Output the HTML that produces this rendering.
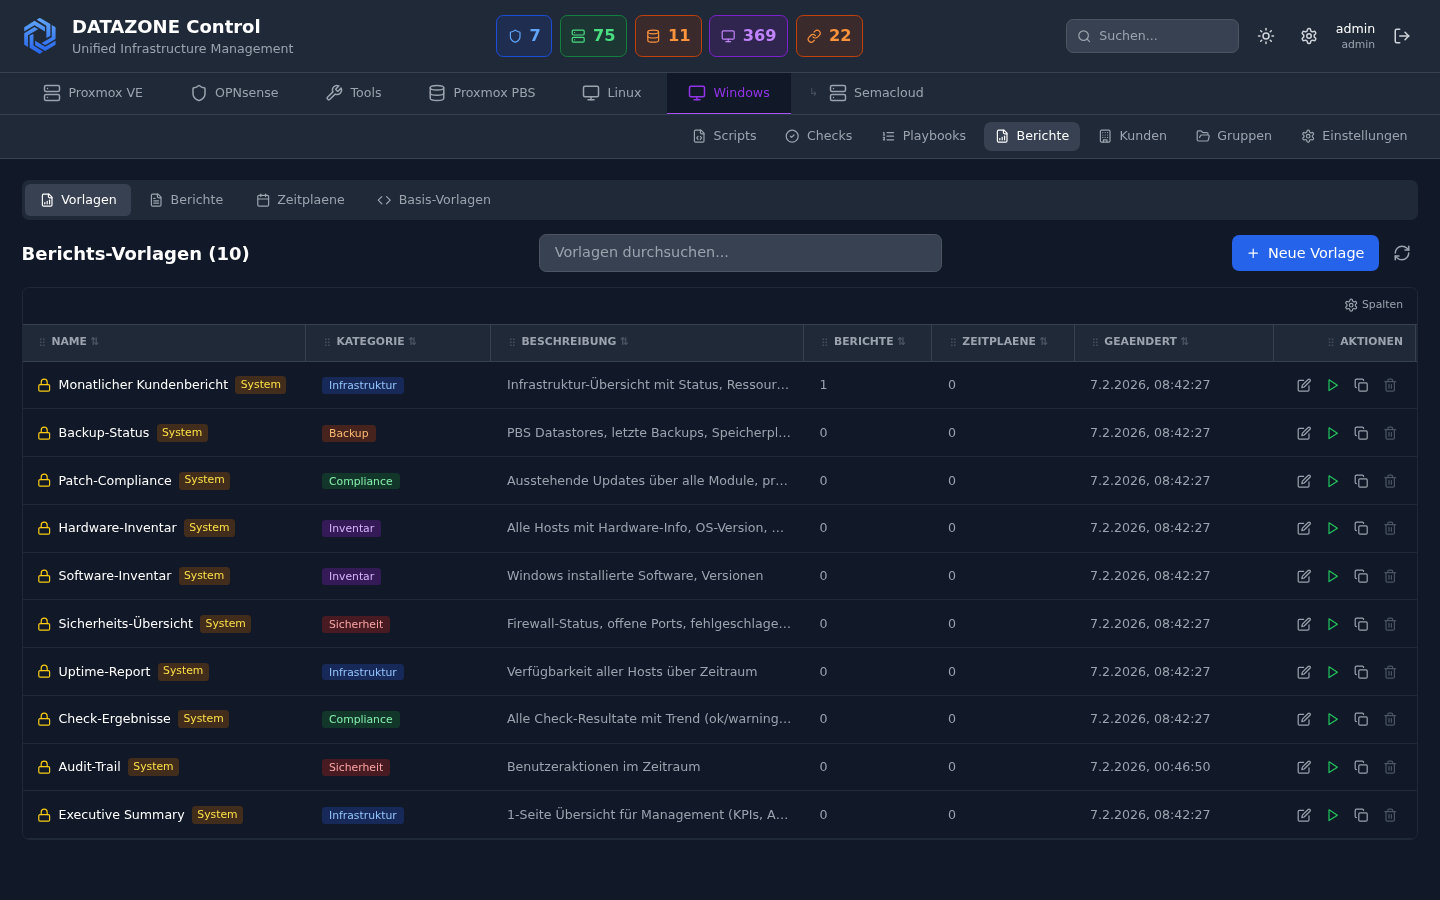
<!DOCTYPE html>
<html lang="de"><head><meta charset="utf-8"><title>DATAZONE Control</title>
<style>
html{font-size:14.4px;background:#111827}
*{box-sizing:border-box;margin:0;padding:0}
body{width:1440px;height:900px;overflow:hidden;will-change:transform;color:#f3f4f6;font-family:"DejaVu Sans","Liberation Sans",sans-serif;font-size:12.6px;line-height:18px}
.ic{width:14.4px;height:14.4px;flex:none;display:block}
.i5{width:18px;height:18px}
.i3{width:12.6px;height:12.6px}
.i25{width:10.8px;height:10.8px}
.gp{color:#4b5563}
.hdr{height:73px;background:#1f2937;border-bottom:1px solid #374151;display:flex;justify-content:space-between;align-items:center;padding:0 21.6px}
.brand{display:flex;align-items:center;gap:14.4px}
.logo{width:36px;height:36px;display:block}
.t1{font-size:18px;line-height:25.2px;font-weight:bold;color:#fff}
.t2{font-size:12.6px;line-height:18px;color:#9ca3af}
.stats{display:flex;gap:7.2px}
.st{display:flex;align-items:center;gap:7.2px;padding:7.2px 10.8px;border:1px solid;border-radius:7.2px;height:41.6px}
.st b{font-size:16.2px;line-height:25.2px;font-weight:bold}
.st.blue{background:#1f2e50;border-color:#1d4ed8;color:#60a5fa}
.st.green{background:#1c3634;border-color:#15803d;color:#4ade80}
.st.orange{background:#3b2a2c;border-color:#c2410c;color:#fb923c}
.st.purple{background:#30254f;border-color:#7e22ce;color:#c084fc}
.right{display:flex;align-items:center;gap:10.8px}
.srch{width:172.8px;height:34.4px;background:#374151;border:1px solid #4b5563;border-radius:7.2px;display:flex;align-items:center;padding-left:9.8px;color:#9ca3af;gap:8.2px}
.srch span{font-size:12.6px}
.ib{width:32.4px;height:32.4px;display:flex;align-items:center;justify-content:center;color:#d1d5db}
.usr{text-align:right}
.u1{font-size:12.6px;line-height:18px;color:#fff}
.u2{font-size:10.8px;line-height:14.4px;color:#9ca3af}
.mod{height:42px;background:#1f2937;border-bottom:1px solid #374151;display:flex;padding:0 21.6px;gap:3.6px}
.mt{display:flex;align-items:center;gap:7.2px;padding:0 21.6px 1px;height:41px;color:#9ca3af;border-bottom:1px solid transparent}
.mt.act{background:#111827;color:#9333ea;border-bottom-color:#a855f7;box-shadow:0 1px 0 #293543}
.mt.sub{padding-left:14.4px}
.mt .arr{color:#4b5563;font-size:10.8px;margin-right:3.2px}
.sub2{height:44px;background:#1f2937;border-bottom:1px solid #374151;display:flex;justify-content:flex-end;align-items:center;padding:0 21.6px;gap:7.2px}
.sb{display:flex;align-items:center;gap:7.2px;padding:0 10.8px;height:28.8px;border-radius:7.2px;color:#9ca3af}
.sb.act{background:#374151;color:#fff}
main{padding:21px 21.6px 0}
.tabs{background:#1f2937;border-radius:7.2px;padding:3.6px;display:flex;gap:3.6px;height:39.6px}
.tb{display:flex;align-items:center;gap:7.2px;padding:0 14.4px;border-radius:5.4px;color:#9ca3af}
.tb.act{background:#374151;color:#fff}
.trow{display:flex;justify-content:space-between;align-items:center;margin-top:14.4px;height:38px}
.trow h2{font-size:18px;line-height:25.2px;font-weight:bold;color:#fff;position:relative;top:1px}
.tsearch{width:403.2px;height:38px;background:#374151;border:1px solid #4b5563;border-radius:7.2px;padding:0 14.4px;font-size:14.4px;line-height:34px;color:#9ca3af}
.tright{display:flex;align-items:center;gap:7.2px}
.newb{display:flex;align-items:center;gap:7.2px;background:#2563eb;color:#fff;border-radius:7.2px;padding:0 14.4px;height:36px;font-size:14.4px}
.rf{width:32.4px;height:32.4px;display:flex;align-items:center;justify-content:center;color:#9ca3af}
.card{margin-top:15px;border:1px solid #1f2937;border-radius:7.2px;overflow:hidden}
.ctool{height:36px;display:flex;justify-content:flex-end;align-items:center;padding:0 14.4px 2px}
.spl{display:flex;align-items:center;gap:3.6px;font-size:10.8px;color:#9ca3af}
.thead{display:flex;height:38px;background:#1f2937;border-top:1px solid #374151;border-bottom:1px solid #374151}
.th{position:relative;display:flex;align-items:center;gap:3.6px;padding:0 14.4px;font-size:10.8px;font-weight:bold;color:#9ca3af}
.grip{width:10.8px;text-align:center;font-weight:normal;color:#444e5d;font-size:10.8px;line-height:14.4px;position:relative;top:1px}
.srt{color:#4b5563;font-size:10.8px;line-height:14.4px;position:relative;top:-1px}
.hl{line-height:14.4px;position:relative;top:-1px}
.th:after{content:'';position:absolute;right:2px;top:0;bottom:0;width:1px;background:#374151}
.c0{width:285px}.c1{width:185px}.c2{width:312.6px}.c3{width:128.4px}.c4{width:142px}.c5{width:200px}.c6{width:141.8px}
.th.c4:after{right:1px}
.th.c2:after{right:1.4px}
.th.c6:after{right:1.2px}
.th.c6{justify-content:flex-end}
.tr{display:flex;height:48px;border-bottom:1px solid #1f2937}
.td{display:flex;align-items:center;padding:0 14.4px;color:#9ca3af;white-space:nowrap;overflow:hidden}
.td .lk{color:#facc15;margin-right:7.2px}
.nm{color:#fff}
.sys{margin-left:7.2px;font-size:10.8px;line-height:14.4px;padding:1.8px 5.4px;border-radius:3.6px;background:#422d1c;color:#fde047}
.cat{font-size:10.8px;line-height:14.4px;padding:1.8px 7px 0.8px;margin-top:1px;border-radius:3.6px}
.cb{background:#1e3a8a80;color:#93c5fd}
.co{background:#7c2d1280;color:#fdba74}
.cg{background:#14532d80;color:#86efac}
.cp{background:#581c8780;color:#d8b4fe}
.cr{background:#7f1d1d80;color:#fca5a5}
.c6.td{justify-content:flex-end;gap:3.6px;padding-right:14.4px}
.ab{width:25.2px;height:25.2px;display:flex;align-items:center;justify-content:center;color:#9ca3af}
.ab.grn{color:#22c55e}
.ab.dim{color:#4b5563}
.u1 .lk{position:relative;top:-1px}
.u1 .sys{padding-top:.8px;padding-bottom:2.8px}
.u1 .cat{padding-bottom:0;margin-bottom:.8px}

</style></head><body>
<header class="hdr">
<div class="brand"><svg class="logo" viewBox="5.6 8 36 36"><defs><linearGradient id="lg" gradientUnits="userSpaceOnUse" x1="0" y1="8" x2="0" y2="44"><stop offset="0" stop-color="#60a5fa"/><stop offset="1" stop-color="#2563eb"/></linearGradient></defs><g fill="url(#lg)" transform="translate(7.82 0) scale(0.983 1) translate(-8.1 0)">
<polygon points="8.1,17.2 18.6,10.8 29.2,16.9 29.2,21.4 18.6,15.3 8.1,21.4"/>
<polygon points="20.8,9.7 23.9,7.8 34.7,14 34.7,26.1 30.6,28.1 30.6,15.8"/>
<polygon points="36.1,15 40,17.2 40,28.9 29.4,35.3 25.8,33.1 36.1,27.2"/>
<polygon points="19.2,30.8 29.4,36.7 40,30.8 40,34.7 29.4,41.1 19.2,35.3"/>
<polygon points="13.6,25.6 17.5,23.9 17.5,35.6 27.2,41.4 23.9,43.9 13.6,37.8"/>
<polygon points="8.1,23.3 18.6,16.9 22.2,19.2 11.9,25.3 11.9,36.9 8.1,34.7"/>
</g></svg><div class="bt"><div class="t1">DATAZONE Control</div><div class="t2">Unified Infrastructure Management</div></div></div>
<div class="stats">
<div class="st blue"><svg class="ic " viewBox="0 0 24 24" fill="none" stroke="currentColor" stroke-width="2" stroke-linecap="round" stroke-linejoin="round"><path d="M20 13c0 5-3.5 7.5-7.66 8.95a1 1 0 0 1-.67-.01C7.5 20.5 4 18 4 13V6a1 1 0 0 1 1-1c2 0 4.5-1.2 6.24-2.72a1.17 1.17 0 0 1 1.52 0C14.51 3.81 17 5 19 5a1 1 0 0 1 1 1z"/></svg><b>7</b></div>
<div class="st green"><svg class="ic " viewBox="0 0 24 24" fill="none" stroke="currentColor" stroke-width="2" stroke-linecap="round" stroke-linejoin="round"><rect width="20" height="8" x="2" y="2" rx="2" ry="2"/><rect width="20" height="8" x="2" y="14" rx="2" ry="2"/><line x1="6" x2="6.01" y1="6" y2="6"/><line x1="6" x2="6.01" y1="18" y2="18"/></svg><b>75</b></div>
<div class="st orange"><svg class="ic " viewBox="0 0 24 24" fill="none" stroke="currentColor" stroke-width="2" stroke-linecap="round" stroke-linejoin="round"><ellipse cx="12" cy="5" rx="9" ry="3"/><path d="M3 5V19A9 3 0 0 0 21 19V5"/><path d="M3 12A9 3 0 0 0 21 12"/></svg><b>11</b></div>
<div class="st purple"><svg class="ic " viewBox="0 0 24 24" fill="none" stroke="currentColor" stroke-width="2" stroke-linecap="round" stroke-linejoin="round"><rect width="20" height="14" x="2" y="3" rx="2"/><line x1="8" x2="16" y1="21" y2="21"/><line x1="12" x2="12" y1="17" y2="21"/></svg><b>369</b></div>
<div class="st orange"><svg class="ic " viewBox="0 0 24 24" fill="none" stroke="currentColor" stroke-width="2" stroke-linecap="round" stroke-linejoin="round"><path d="M10 13a5 5 0 0 0 7.54.54l3-3a5 5 0 0 0-7.07-7.07l-1.72 1.71"/><path d="M14 11a5 5 0 0 0-7.54-.54l-3 3a5 5 0 0 0 7.07 7.07l1.71-1.71"/></svg><b>22</b></div>
</div>
<div class="right">
<div class="srch"><svg class="ic " viewBox="0 0 24 24" fill="none" stroke="currentColor" stroke-width="2" stroke-linecap="round" stroke-linejoin="round"><circle cx="11" cy="11" r="8"/><path d="m21 21-4.3-4.3"/></svg><span>Suchen...</span></div>
<div class="ib"><svg class="ic i5" viewBox="0 0 24 24" fill="none" stroke="currentColor" stroke-width="2" stroke-linecap="round" stroke-linejoin="round"><circle cx="12" cy="12" r="4"/><path d="M12 2v2"/><path d="M12 20v2"/><path d="m4.93 4.93 1.41 1.41"/><path d="m17.66 17.66 1.41 1.41"/><path d="M2 12h2"/><path d="M20 12h2"/><path d="m6.34 17.66-1.41 1.41"/><path d="m19.07 4.93-1.41 1.41"/></svg></div>
<div class="ib"><svg class="ic i5" viewBox="0 0 24 24" fill="none" stroke="currentColor" stroke-width="2" stroke-linecap="round" stroke-linejoin="round"><path d="M12.22 2h-.44a2 2 0 0 0-2 2v.18a2 2 0 0 1-1 1.73l-.43.25a2 2 0 0 1-2 0l-.15-.08a2 2 0 0 0-2.73.73l-.22.38a2 2 0 0 0 .73 2.73l.15.1a2 2 0 0 1 1 1.72v.51a2 2 0 0 1-1 1.74l-.15.09a2 2 0 0 0-.73 2.73l.22.38a2 2 0 0 0 2.73.73l.15-.08a2 2 0 0 1 2 0l.43.25a2 2 0 0 1 1 1.73V20a2 2 0 0 0 2 2h.44a2 2 0 0 0 2-2v-.18a2 2 0 0 1 1-1.73l.43-.25a2 2 0 0 1 2 0l.15.08a2 2 0 0 0 2.73-.73l.22-.39a2 2 0 0 0-.73-2.73l-.15-.08a2 2 0 0 1-1-1.74v-.5a2 2 0 0 1 1-1.74l.15-.09a2 2 0 0 0 .73-2.73l-.22-.38a2 2 0 0 0-2.73-.73l-.15.08a2 2 0 0 1-2 0l-.43-.25a2 2 0 0 1-1-1.73V4a2 2 0 0 0-2-2z"/><circle cx="12" cy="12" r="3"/></svg></div>
<div class="usr"><div class="u1">admin</div><div class="u2">admin</div></div>
<div class="ib"><svg class="ic i5" viewBox="0 0 24 24" fill="none" stroke="currentColor" stroke-width="2" stroke-linecap="round" stroke-linejoin="round"><path d="M9 21H5a2 2 0 0 1-2-2V5a2 2 0 0 1 2-2h4"/><polyline points="16 17 21 12 16 7"/><line x1="21" x2="9" y1="12" y2="12"/></svg></div>
</div>
</header>
<nav class="mod"><div class="mt "><svg class="ic i5" viewBox="0 0 24 24" fill="none" stroke="currentColor" stroke-width="2" stroke-linecap="round" stroke-linejoin="round"><rect width="20" height="8" x="2" y="2" rx="2" ry="2"/><rect width="20" height="8" x="2" y="14" rx="2" ry="2"/><line x1="6" x2="6.01" y1="6" y2="6"/><line x1="6" x2="6.01" y1="18" y2="18"/></svg><span>Proxmox VE</span></div><div class="mt "><svg class="ic i5" viewBox="0 0 24 24" fill="none" stroke="currentColor" stroke-width="2" stroke-linecap="round" stroke-linejoin="round"><path d="M20 13c0 5-3.5 7.5-7.66 8.95a1 1 0 0 1-.67-.01C7.5 20.5 4 18 4 13V6a1 1 0 0 1 1-1c2 0 4.5-1.2 6.24-2.72a1.17 1.17 0 0 1 1.52 0C14.51 3.81 17 5 19 5a1 1 0 0 1 1 1z"/></svg><span>OPNsense</span></div><div class="mt "><svg class="ic i5" viewBox="0 0 24 24" fill="none" stroke="currentColor" stroke-width="2" stroke-linecap="round" stroke-linejoin="round"><path d="M14.7 6.3a1 1 0 0 0 0 1.4l1.6 1.6a1 1 0 0 0 1.4 0l3.77-3.77a6 6 0 0 1-7.94 7.94l-6.91 6.91a2.12 2.12 0 0 1-3-3l6.91-6.91a6 6 0 0 1 7.94-7.94l-3.76 3.76z"/></svg><span>Tools</span></div><div class="mt "><svg class="ic i5" viewBox="0 0 24 24" fill="none" stroke="currentColor" stroke-width="2" stroke-linecap="round" stroke-linejoin="round"><ellipse cx="12" cy="5" rx="9" ry="3"/><path d="M3 5V19A9 3 0 0 0 21 19V5"/><path d="M3 12A9 3 0 0 0 21 12"/></svg><span>Proxmox PBS</span></div><div class="mt "><svg class="ic i5" viewBox="0 0 24 24" fill="none" stroke="currentColor" stroke-width="2" stroke-linecap="round" stroke-linejoin="round"><rect width="20" height="14" x="2" y="3" rx="2"/><line x1="8" x2="16" y1="21" y2="21"/><line x1="12" x2="12" y1="17" y2="21"/></svg><span>Linux</span></div><div class="mt act"><svg class="ic i5" viewBox="0 0 24 24" fill="none" stroke="currentColor" stroke-width="2" stroke-linecap="round" stroke-linejoin="round"><rect width="20" height="14" x="2" y="3" rx="2"/><line x1="8" x2="16" y1="21" y2="21"/><line x1="12" x2="12" y1="17" y2="21"/></svg><span>Windows</span></div><div class="mt sub"><span class="arr">↳</span><svg class="ic i5" viewBox="0 0 24 24" fill="none" stroke="currentColor" stroke-width="2" stroke-linecap="round" stroke-linejoin="round"><rect width="20" height="8" x="2" y="2" rx="2" ry="2"/><rect width="20" height="8" x="2" y="14" rx="2" ry="2"/><line x1="6" x2="6.01" y1="6" y2="6"/><line x1="6" x2="6.01" y1="18" y2="18"/></svg><span>Semacloud</span></div></nav>
<nav class="sub2"><div class="sb "><svg class="ic " viewBox="0 0 24 24" fill="none" stroke="currentColor" stroke-width="2" stroke-linecap="round" stroke-linejoin="round"><path d="M10 12.5 8 15l2 2.5"/><path d="m14 12.5 2 2.5-2 2.5"/><path d="M14 2v4a2 2 0 0 0 2 2h4"/><path d="M15 2H6a2 2 0 0 0-2 2v16a2 2 0 0 0 2 2h12a2 2 0 0 0 2-2V7z"/></svg><span>Scripts</span></div><div class="sb "><svg class="ic " viewBox="0 0 24 24" fill="none" stroke="currentColor" stroke-width="2" stroke-linecap="round" stroke-linejoin="round"><circle cx="12" cy="12" r="10"/><path d="m9 12 2 2 4-4"/></svg><span>Checks</span></div><div class="sb "><svg class="ic " viewBox="0 0 24 24" fill="none" stroke="currentColor" stroke-width="2" stroke-linecap="round" stroke-linejoin="round"><line x1="10" x2="21" y1="6" y2="6"/><line x1="10" x2="21" y1="12" y2="12"/><line x1="10" x2="21" y1="18" y2="18"/><path d="M4 6h1v4"/><path d="M4 10h2"/><path d="M6 18H4c0-1 2-2 2-3s-1-1.5-2-1"/></svg><span>Playbooks</span></div><div class="sb act"><svg class="ic " viewBox="0 0 24 24" fill="none" stroke="currentColor" stroke-width="2" stroke-linecap="round" stroke-linejoin="round"><path d="M15 2H6a2 2 0 0 0-2 2v16a2 2 0 0 0 2 2h12a2 2 0 0 0 2-2V7Z"/><path d="M14 2v4a2 2 0 0 0 2 2h4"/><path d="M8 18v-2"/><path d="M12 18v-4"/><path d="M16 18v-6"/></svg><span>Berichte</span></div><div class="sb "><svg class="ic " viewBox="0 0 24 24" fill="none" stroke="currentColor" stroke-width="2" stroke-linecap="round" stroke-linejoin="round"><rect width="16" height="20" x="4" y="2" rx="2" ry="2"/><path d="M9 22v-4h6v4"/><path d="M8 6h.01"/><path d="M16 6h.01"/><path d="M12 6h.01"/><path d="M12 10h.01"/><path d="M12 14h.01"/><path d="M16 10h.01"/><path d="M16 14h.01"/><path d="M8 10h.01"/><path d="M8 14h.01"/></svg><span>Kunden</span></div><div class="sb "><svg class="ic " viewBox="0 0 24 24" fill="none" stroke="currentColor" stroke-width="2" stroke-linecap="round" stroke-linejoin="round"><path d="m6 14 1.5-2.9A2 2 0 0 1 9.24 10H20a2 2 0 0 1 1.94 2.5l-1.54 6a2 2 0 0 1-1.95 1.5H4a2 2 0 0 1-2-2V5a2 2 0 0 1 2-2h3.9a2 2 0 0 1 1.69.9l.81 1.2a2 2 0 0 0 1.67.9H18a2 2 0 0 1 2 2v2"/></svg><span>Gruppen</span></div><div class="sb "><svg class="ic " viewBox="0 0 24 24" fill="none" stroke="currentColor" stroke-width="2" stroke-linecap="round" stroke-linejoin="round"><path d="M12.22 2h-.44a2 2 0 0 0-2 2v.18a2 2 0 0 1-1 1.73l-.43.25a2 2 0 0 1-2 0l-.15-.08a2 2 0 0 0-2.73.73l-.22.38a2 2 0 0 0 .73 2.73l.15.1a2 2 0 0 1 1 1.72v.51a2 2 0 0 1-1 1.74l-.15.09a2 2 0 0 0-.73 2.73l.22.38a2 2 0 0 0 2.73.73l.15-.08a2 2 0 0 1 2 0l.43.25a2 2 0 0 1 1 1.73V20a2 2 0 0 0 2 2h.44a2 2 0 0 0 2-2v-.18a2 2 0 0 1 1-1.73l.43-.25a2 2 0 0 1 2 0l.15.08a2 2 0 0 0 2.73-.73l.22-.39a2 2 0 0 0-.73-2.73l-.15-.08a2 2 0 0 1-1-1.74v-.5a2 2 0 0 1 1-1.74l.15-.09a2 2 0 0 0 .73-2.73l-.22-.38a2 2 0 0 0-2.73-.73l-.15.08a2 2 0 0 1-2 0l-.43-.25a2 2 0 0 1-1-1.73V4a2 2 0 0 0-2-2z"/><circle cx="12" cy="12" r="3"/></svg><span>Einstellungen</span></div></nav>
<main>
<div class="tabs"><div class="tb act"><svg class="ic " viewBox="0 0 24 24" fill="none" stroke="currentColor" stroke-width="2" stroke-linecap="round" stroke-linejoin="round"><path d="M15 2H6a2 2 0 0 0-2 2v16a2 2 0 0 0 2 2h12a2 2 0 0 0 2-2V7Z"/><path d="M14 2v4a2 2 0 0 0 2 2h4"/><path d="M8 18v-2"/><path d="M12 18v-4"/><path d="M16 18v-6"/></svg><span>Vorlagen</span></div><div class="tb "><svg class="ic " viewBox="0 0 24 24" fill="none" stroke="currentColor" stroke-width="2" stroke-linecap="round" stroke-linejoin="round"><path d="M15 2H6a2 2 0 0 0-2 2v16a2 2 0 0 0 2 2h12a2 2 0 0 0 2-2V7Z"/><path d="M14 2v4a2 2 0 0 0 2 2h4"/><path d="M10 9H8"/><path d="M16 13H8"/><path d="M16 17H8"/></svg><span>Berichte</span></div><div class="tb "><svg class="ic " viewBox="0 0 24 24" fill="none" stroke="currentColor" stroke-width="2" stroke-linecap="round" stroke-linejoin="round"><path d="M8 2v4"/><path d="M16 2v4"/><rect width="18" height="18" x="3" y="4" rx="2"/><path d="M3 10h18"/></svg><span>Zeitplaene</span></div><div class="tb "><svg class="ic " viewBox="0 0 24 24" fill="none" stroke="currentColor" stroke-width="2" stroke-linecap="round" stroke-linejoin="round"><polyline points="16 18 22 12 16 6"/><polyline points="8 6 2 12 8 18"/></svg><span>Basis-Vorlagen</span></div></div>
<div class="trow"><h2>Berichts-Vorlagen (10)</h2><div class="tsearch">Vorlagen durchsuchen...</div><div class="tright"><div class="newb"><svg class="ic " viewBox="0 0 24 24" fill="none" stroke="currentColor" stroke-width="2" stroke-linecap="round" stroke-linejoin="round"><path d="M5 12h14"/><path d="M12 5v14"/></svg><span>Neue Vorlage</span></div><div class="rf"><svg class="ic i5" viewBox="0 0 24 24" fill="none" stroke="currentColor" stroke-width="2" stroke-linecap="round" stroke-linejoin="round"><path d="M3 12a9 9 0 0 1 9-9 9.75 9.75 0 0 1 6.74 2.74L21 8"/><path d="M21 3v5h-5"/><path d="M21 12a9 9 0 0 1-9 9 9.75 9.75 0 0 1-6.74-2.74L3 16"/><path d="M8 16H3v5"/></svg></div></div></div>
<div class="card"><div class="ctool"><div class="spl"><svg class="ic " viewBox="0 0 24 24" fill="none" stroke="currentColor" stroke-width="2" stroke-linecap="round" stroke-linejoin="round"><path d="M12.22 2h-.44a2 2 0 0 0-2 2v.18a2 2 0 0 1-1 1.73l-.43.25a2 2 0 0 1-2 0l-.15-.08a2 2 0 0 0-2.73.73l-.22.38a2 2 0 0 0 .73 2.73l.15.1a2 2 0 0 1 1 1.72v.51a2 2 0 0 1-1 1.74l-.15.09a2 2 0 0 0-.73 2.73l.22.38a2 2 0 0 0 2.73.73l.15-.08a2 2 0 0 1 2 0l.43.25a2 2 0 0 1 1 1.73V20a2 2 0 0 0 2 2h.44a2 2 0 0 0 2-2v-.18a2 2 0 0 1 1-1.73l.43-.25a2 2 0 0 1 2 0l.15.08a2 2 0 0 0 2.73-.73l.22-.39a2 2 0 0 0-.73-2.73l-.15-.08a2 2 0 0 1-1-1.74v-.5a2 2 0 0 1 1-1.74l.15-.09a2 2 0 0 0 .73-2.73l-.22-.38a2 2 0 0 0-2.73-.73l-.15.08a2 2 0 0 1-2 0l-.43-.25a2 2 0 0 1-1-1.73V4a2 2 0 0 0-2-2z"/><circle cx="12" cy="12" r="3"/></svg><span>Spalten</span></div></div><div class="thead"><div class="th c0"><span class="grip">⠿</span><span class="hl">NAME</span><span class="srt">⇅</span></div><div class="th c1"><span class="grip">⠿</span><span class="hl">KATEGORIE</span><span class="srt">⇅</span></div><div class="th c2"><span class="grip">⠿</span><span class="hl">BESCHREIBUNG</span><span class="srt">⇅</span></div><div class="th c3"><span class="grip">⠿</span><span class="hl">BERICHTE</span><span class="srt">⇅</span></div><div class="th c4"><span class="grip">⠿</span><span class="hl">ZEITPLAENE</span><span class="srt">⇅</span></div><div class="th c5"><span class="grip">⠿</span><span class="hl">GEAENDERT</span><span class="srt">⇅</span></div><div class="th c6"><span class="grip">⠿</span><span class="hl">AKTIONEN</span></div></div><div class="tbody"><div class="tr" style="height:47px"><div class="td c0"><svg class="ic lk" viewBox="0 0 24 24" fill="none" stroke="currentColor" stroke-width="2" stroke-linecap="round" stroke-linejoin="round"><rect width="18" height="11" x="3" y="11" rx="2" ry="2"/><path d="M7 11V7a5 5 0 0 1 10 0v4"/></svg><span class="nm">Monatlicher Kundenbericht</span><span class="sys">System</span></div><div class="td c1"><span class="cat cb">Infrastruktur</span></div><div class="td c2"><span class="ds">Infrastruktur-Übersicht mit Status, Ressour…</span></div><div class="td c3">1</div><div class="td c4">0</div><div class="td c5">7.2.2026, 08:42:27</div><div class="td c6"><span class="ab"><svg class="ic " viewBox="0 0 24 24" fill="none" stroke="currentColor" stroke-width="2" stroke-linecap="round" stroke-linejoin="round"><path d="M11 4H4a2 2 0 0 0-2 2v14a2 2 0 0 0 2 2h14a2 2 0 0 0 2-2v-7"/><path d="M18.5 2.5a2.121 2.121 0 0 1 3 3L12 15l-4 1 1-4 9.5-9.5z"/></svg></span><span class="ab grn"><svg class="ic " viewBox="0 0 24 24" fill="none" stroke="currentColor" stroke-width="2" stroke-linecap="round" stroke-linejoin="round"><polygon points="5 3 19 12 5 21 5 3"/></svg></span><span class="ab"><svg class="ic " viewBox="0 0 24 24" fill="none" stroke="currentColor" stroke-width="2" stroke-linecap="round" stroke-linejoin="round"><rect width="14" height="14" x="8" y="8" rx="2" ry="2"/><path d="M4 16c-1.1 0-2-.9-2-2V4c0-1.1.9-2 2-2h10c1.1 0 2 .9 2 2"/></svg></span><span class="ab dim"><svg class="ic " viewBox="0 0 24 24" fill="none" stroke="currentColor" stroke-width="2" stroke-linecap="round" stroke-linejoin="round"><path d="M3 6h18"/><path d="M19 6v14c0 1-1 2-2 2H7c-1 0-2-1-2-2V6"/><path d="M8 6V4c0-1 1-2 2-2h4c1 0 2 1 2 2v2"/><line x1="10" x2="10" y1="11" y2="17"/><line x1="14" x2="14" y1="11" y2="17"/></svg></span></div></div>
<div class="tr" style="height:48px;padding-top:1px"><div class="td c0"><svg class="ic lk" viewBox="0 0 24 24" fill="none" stroke="currentColor" stroke-width="2" stroke-linecap="round" stroke-linejoin="round"><rect width="18" height="11" x="3" y="11" rx="2" ry="2"/><path d="M7 11V7a5 5 0 0 1 10 0v4"/></svg><span class="nm">Backup-Status</span><span class="sys">System</span></div><div class="td c1"><span class="cat co">Backup</span></div><div class="td c2"><span class="ds">PBS Datastores, letzte Backups, Speicherpl…</span></div><div class="td c3">0</div><div class="td c4">0</div><div class="td c5">7.2.2026, 08:42:27</div><div class="td c6"><span class="ab"><svg class="ic " viewBox="0 0 24 24" fill="none" stroke="currentColor" stroke-width="2" stroke-linecap="round" stroke-linejoin="round"><path d="M11 4H4a2 2 0 0 0-2 2v14a2 2 0 0 0 2 2h14a2 2 0 0 0 2-2v-7"/><path d="M18.5 2.5a2.121 2.121 0 0 1 3 3L12 15l-4 1 1-4 9.5-9.5z"/></svg></span><span class="ab grn"><svg class="ic " viewBox="0 0 24 24" fill="none" stroke="currentColor" stroke-width="2" stroke-linecap="round" stroke-linejoin="round"><polygon points="5 3 19 12 5 21 5 3"/></svg></span><span class="ab"><svg class="ic " viewBox="0 0 24 24" fill="none" stroke="currentColor" stroke-width="2" stroke-linecap="round" stroke-linejoin="round"><rect width="14" height="14" x="8" y="8" rx="2" ry="2"/><path d="M4 16c-1.1 0-2-.9-2-2V4c0-1.1.9-2 2-2h10c1.1 0 2 .9 2 2"/></svg></span><span class="ab dim"><svg class="ic " viewBox="0 0 24 24" fill="none" stroke="currentColor" stroke-width="2" stroke-linecap="round" stroke-linejoin="round"><path d="M3 6h18"/><path d="M19 6v14c0 1-1 2-2 2H7c-1 0-2-1-2-2V6"/><path d="M8 6V4c0-1 1-2 2-2h4c1 0 2 1 2 2v2"/><line x1="10" x2="10" y1="11" y2="17"/><line x1="14" x2="14" y1="11" y2="17"/></svg></span></div></div>
<div class="tr u1" style="height:48px;padding-top:1px"><div class="td c0"><svg class="ic lk" viewBox="0 0 24 24" fill="none" stroke="currentColor" stroke-width="2" stroke-linecap="round" stroke-linejoin="round"><rect width="18" height="11" x="3" y="11" rx="2" ry="2"/><path d="M7 11V7a5 5 0 0 1 10 0v4"/></svg><span class="nm">Patch-Compliance</span><span class="sys">System</span></div><div class="td c1"><span class="cat cg">Compliance</span></div><div class="td c2"><span class="ds">Ausstehende Updates über alle Module, pr…</span></div><div class="td c3">0</div><div class="td c4">0</div><div class="td c5">7.2.2026, 08:42:27</div><div class="td c6"><span class="ab"><svg class="ic " viewBox="0 0 24 24" fill="none" stroke="currentColor" stroke-width="2" stroke-linecap="round" stroke-linejoin="round"><path d="M11 4H4a2 2 0 0 0-2 2v14a2 2 0 0 0 2 2h14a2 2 0 0 0 2-2v-7"/><path d="M18.5 2.5a2.121 2.121 0 0 1 3 3L12 15l-4 1 1-4 9.5-9.5z"/></svg></span><span class="ab grn"><svg class="ic " viewBox="0 0 24 24" fill="none" stroke="currentColor" stroke-width="2" stroke-linecap="round" stroke-linejoin="round"><polygon points="5 3 19 12 5 21 5 3"/></svg></span><span class="ab"><svg class="ic " viewBox="0 0 24 24" fill="none" stroke="currentColor" stroke-width="2" stroke-linecap="round" stroke-linejoin="round"><rect width="14" height="14" x="8" y="8" rx="2" ry="2"/><path d="M4 16c-1.1 0-2-.9-2-2V4c0-1.1.9-2 2-2h10c1.1 0 2 .9 2 2"/></svg></span><span class="ab dim"><svg class="ic " viewBox="0 0 24 24" fill="none" stroke="currentColor" stroke-width="2" stroke-linecap="round" stroke-linejoin="round"><path d="M3 6h18"/><path d="M19 6v14c0 1-1 2-2 2H7c-1 0-2-1-2-2V6"/><path d="M8 6V4c0-1 1-2 2-2h4c1 0 2 1 2 2v2"/><line x1="10" x2="10" y1="11" y2="17"/><line x1="14" x2="14" y1="11" y2="17"/></svg></span></div></div>
<div class="tr" style="height:48px;padding-bottom:1px"><div class="td c0"><svg class="ic lk" viewBox="0 0 24 24" fill="none" stroke="currentColor" stroke-width="2" stroke-linecap="round" stroke-linejoin="round"><rect width="18" height="11" x="3" y="11" rx="2" ry="2"/><path d="M7 11V7a5 5 0 0 1 10 0v4"/></svg><span class="nm">Hardware-Inventar</span><span class="sys">System</span></div><div class="td c1"><span class="cat cp">Inventar</span></div><div class="td c2"><span class="ds">Alle Hosts mit Hardware-Info, OS-Version, …</span></div><div class="td c3">0</div><div class="td c4">0</div><div class="td c5">7.2.2026, 08:42:27</div><div class="td c6"><span class="ab"><svg class="ic " viewBox="0 0 24 24" fill="none" stroke="currentColor" stroke-width="2" stroke-linecap="round" stroke-linejoin="round"><path d="M11 4H4a2 2 0 0 0-2 2v14a2 2 0 0 0 2 2h14a2 2 0 0 0 2-2v-7"/><path d="M18.5 2.5a2.121 2.121 0 0 1 3 3L12 15l-4 1 1-4 9.5-9.5z"/></svg></span><span class="ab grn"><svg class="ic " viewBox="0 0 24 24" fill="none" stroke="currentColor" stroke-width="2" stroke-linecap="round" stroke-linejoin="round"><polygon points="5 3 19 12 5 21 5 3"/></svg></span><span class="ab"><svg class="ic " viewBox="0 0 24 24" fill="none" stroke="currentColor" stroke-width="2" stroke-linecap="round" stroke-linejoin="round"><rect width="14" height="14" x="8" y="8" rx="2" ry="2"/><path d="M4 16c-1.1 0-2-.9-2-2V4c0-1.1.9-2 2-2h10c1.1 0 2 .9 2 2"/></svg></span><span class="ab dim"><svg class="ic " viewBox="0 0 24 24" fill="none" stroke="currentColor" stroke-width="2" stroke-linecap="round" stroke-linejoin="round"><path d="M3 6h18"/><path d="M19 6v14c0 1-1 2-2 2H7c-1 0-2-1-2-2V6"/><path d="M8 6V4c0-1 1-2 2-2h4c1 0 2 1 2 2v2"/><line x1="10" x2="10" y1="11" y2="17"/><line x1="14" x2="14" y1="11" y2="17"/></svg></span></div></div>
<div class="tr" style="height:47px"><div class="td c0"><svg class="ic lk" viewBox="0 0 24 24" fill="none" stroke="currentColor" stroke-width="2" stroke-linecap="round" stroke-linejoin="round"><rect width="18" height="11" x="3" y="11" rx="2" ry="2"/><path d="M7 11V7a5 5 0 0 1 10 0v4"/></svg><span class="nm">Software-Inventar</span><span class="sys">System</span></div><div class="td c1"><span class="cat cp">Inventar</span></div><div class="td c2"><span class="ds">Windows installierte Software, Versionen</span></div><div class="td c3">0</div><div class="td c4">0</div><div class="td c5">7.2.2026, 08:42:27</div><div class="td c6"><span class="ab"><svg class="ic " viewBox="0 0 24 24" fill="none" stroke="currentColor" stroke-width="2" stroke-linecap="round" stroke-linejoin="round"><path d="M11 4H4a2 2 0 0 0-2 2v14a2 2 0 0 0 2 2h14a2 2 0 0 0 2-2v-7"/><path d="M18.5 2.5a2.121 2.121 0 0 1 3 3L12 15l-4 1 1-4 9.5-9.5z"/></svg></span><span class="ab grn"><svg class="ic " viewBox="0 0 24 24" fill="none" stroke="currentColor" stroke-width="2" stroke-linecap="round" stroke-linejoin="round"><polygon points="5 3 19 12 5 21 5 3"/></svg></span><span class="ab"><svg class="ic " viewBox="0 0 24 24" fill="none" stroke="currentColor" stroke-width="2" stroke-linecap="round" stroke-linejoin="round"><rect width="14" height="14" x="8" y="8" rx="2" ry="2"/><path d="M4 16c-1.1 0-2-.9-2-2V4c0-1.1.9-2 2-2h10c1.1 0 2 .9 2 2"/></svg></span><span class="ab dim"><svg class="ic " viewBox="0 0 24 24" fill="none" stroke="currentColor" stroke-width="2" stroke-linecap="round" stroke-linejoin="round"><path d="M3 6h18"/><path d="M19 6v14c0 1-1 2-2 2H7c-1 0-2-1-2-2V6"/><path d="M8 6V4c0-1 1-2 2-2h4c1 0 2 1 2 2v2"/><line x1="10" x2="10" y1="11" y2="17"/><line x1="14" x2="14" y1="11" y2="17"/></svg></span></div></div>
<div class="tr" style="height:48px;padding-top:1px"><div class="td c0"><svg class="ic lk" viewBox="0 0 24 24" fill="none" stroke="currentColor" stroke-width="2" stroke-linecap="round" stroke-linejoin="round"><rect width="18" height="11" x="3" y="11" rx="2" ry="2"/><path d="M7 11V7a5 5 0 0 1 10 0v4"/></svg><span class="nm">Sicherheits-Übersicht</span><span class="sys">System</span></div><div class="td c1"><span class="cat cr">Sicherheit</span></div><div class="td c2"><span class="ds">Firewall-Status, offene Ports, fehlgeschlage…</span></div><div class="td c3">0</div><div class="td c4">0</div><div class="td c5">7.2.2026, 08:42:27</div><div class="td c6"><span class="ab"><svg class="ic " viewBox="0 0 24 24" fill="none" stroke="currentColor" stroke-width="2" stroke-linecap="round" stroke-linejoin="round"><path d="M11 4H4a2 2 0 0 0-2 2v14a2 2 0 0 0 2 2h14a2 2 0 0 0 2-2v-7"/><path d="M18.5 2.5a2.121 2.121 0 0 1 3 3L12 15l-4 1 1-4 9.5-9.5z"/></svg></span><span class="ab grn"><svg class="ic " viewBox="0 0 24 24" fill="none" stroke="currentColor" stroke-width="2" stroke-linecap="round" stroke-linejoin="round"><polygon points="5 3 19 12 5 21 5 3"/></svg></span><span class="ab"><svg class="ic " viewBox="0 0 24 24" fill="none" stroke="currentColor" stroke-width="2" stroke-linecap="round" stroke-linejoin="round"><rect width="14" height="14" x="8" y="8" rx="2" ry="2"/><path d="M4 16c-1.1 0-2-.9-2-2V4c0-1.1.9-2 2-2h10c1.1 0 2 .9 2 2"/></svg></span><span class="ab dim"><svg class="ic " viewBox="0 0 24 24" fill="none" stroke="currentColor" stroke-width="2" stroke-linecap="round" stroke-linejoin="round"><path d="M3 6h18"/><path d="M19 6v14c0 1-1 2-2 2H7c-1 0-2-1-2-2V6"/><path d="M8 6V4c0-1 1-2 2-2h4c1 0 2 1 2 2v2"/><line x1="10" x2="10" y1="11" y2="17"/><line x1="14" x2="14" y1="11" y2="17"/></svg></span></div></div>
<div class="tr u1" style="height:48px;padding-top:1px"><div class="td c0"><svg class="ic lk" viewBox="0 0 24 24" fill="none" stroke="currentColor" stroke-width="2" stroke-linecap="round" stroke-linejoin="round"><rect width="18" height="11" x="3" y="11" rx="2" ry="2"/><path d="M7 11V7a5 5 0 0 1 10 0v4"/></svg><span class="nm">Uptime-Report</span><span class="sys">System</span></div><div class="td c1"><span class="cat cb">Infrastruktur</span></div><div class="td c2"><span class="ds">Verfügbarkeit aller Hosts über Zeitraum</span></div><div class="td c3">0</div><div class="td c4">0</div><div class="td c5">7.2.2026, 08:42:27</div><div class="td c6"><span class="ab"><svg class="ic " viewBox="0 0 24 24" fill="none" stroke="currentColor" stroke-width="2" stroke-linecap="round" stroke-linejoin="round"><path d="M11 4H4a2 2 0 0 0-2 2v14a2 2 0 0 0 2 2h14a2 2 0 0 0 2-2v-7"/><path d="M18.5 2.5a2.121 2.121 0 0 1 3 3L12 15l-4 1 1-4 9.5-9.5z"/></svg></span><span class="ab grn"><svg class="ic " viewBox="0 0 24 24" fill="none" stroke="currentColor" stroke-width="2" stroke-linecap="round" stroke-linejoin="round"><polygon points="5 3 19 12 5 21 5 3"/></svg></span><span class="ab"><svg class="ic " viewBox="0 0 24 24" fill="none" stroke="currentColor" stroke-width="2" stroke-linecap="round" stroke-linejoin="round"><rect width="14" height="14" x="8" y="8" rx="2" ry="2"/><path d="M4 16c-1.1 0-2-.9-2-2V4c0-1.1.9-2 2-2h10c1.1 0 2 .9 2 2"/></svg></span><span class="ab dim"><svg class="ic " viewBox="0 0 24 24" fill="none" stroke="currentColor" stroke-width="2" stroke-linecap="round" stroke-linejoin="round"><path d="M3 6h18"/><path d="M19 6v14c0 1-1 2-2 2H7c-1 0-2-1-2-2V6"/><path d="M8 6V4c0-1 1-2 2-2h4c1 0 2 1 2 2v2"/><line x1="10" x2="10" y1="11" y2="17"/><line x1="14" x2="14" y1="11" y2="17"/></svg></span></div></div>
<div class="tr" style="height:48px;padding-bottom:1px"><div class="td c0"><svg class="ic lk" viewBox="0 0 24 24" fill="none" stroke="currentColor" stroke-width="2" stroke-linecap="round" stroke-linejoin="round"><rect width="18" height="11" x="3" y="11" rx="2" ry="2"/><path d="M7 11V7a5 5 0 0 1 10 0v4"/></svg><span class="nm">Check-Ergebnisse</span><span class="sys">System</span></div><div class="td c1"><span class="cat cg">Compliance</span></div><div class="td c2"><span class="ds">Alle Check-Resultate mit Trend (ok/warning…</span></div><div class="td c3">0</div><div class="td c4">0</div><div class="td c5">7.2.2026, 08:42:27</div><div class="td c6"><span class="ab"><svg class="ic " viewBox="0 0 24 24" fill="none" stroke="currentColor" stroke-width="2" stroke-linecap="round" stroke-linejoin="round"><path d="M11 4H4a2 2 0 0 0-2 2v14a2 2 0 0 0 2 2h14a2 2 0 0 0 2-2v-7"/><path d="M18.5 2.5a2.121 2.121 0 0 1 3 3L12 15l-4 1 1-4 9.5-9.5z"/></svg></span><span class="ab grn"><svg class="ic " viewBox="0 0 24 24" fill="none" stroke="currentColor" stroke-width="2" stroke-linecap="round" stroke-linejoin="round"><polygon points="5 3 19 12 5 21 5 3"/></svg></span><span class="ab"><svg class="ic " viewBox="0 0 24 24" fill="none" stroke="currentColor" stroke-width="2" stroke-linecap="round" stroke-linejoin="round"><rect width="14" height="14" x="8" y="8" rx="2" ry="2"/><path d="M4 16c-1.1 0-2-.9-2-2V4c0-1.1.9-2 2-2h10c1.1 0 2 .9 2 2"/></svg></span><span class="ab dim"><svg class="ic " viewBox="0 0 24 24" fill="none" stroke="currentColor" stroke-width="2" stroke-linecap="round" stroke-linejoin="round"><path d="M3 6h18"/><path d="M19 6v14c0 1-1 2-2 2H7c-1 0-2-1-2-2V6"/><path d="M8 6V4c0-1 1-2 2-2h4c1 0 2 1 2 2v2"/><line x1="10" x2="10" y1="11" y2="17"/><line x1="14" x2="14" y1="11" y2="17"/></svg></span></div></div>
<div class="tr" style="height:47px"><div class="td c0"><svg class="ic lk" viewBox="0 0 24 24" fill="none" stroke="currentColor" stroke-width="2" stroke-linecap="round" stroke-linejoin="round"><rect width="18" height="11" x="3" y="11" rx="2" ry="2"/><path d="M7 11V7a5 5 0 0 1 10 0v4"/></svg><span class="nm">Audit-Trail</span><span class="sys">System</span></div><div class="td c1"><span class="cat cr">Sicherheit</span></div><div class="td c2"><span class="ds">Benutzeraktionen im Zeitraum</span></div><div class="td c3">0</div><div class="td c4">0</div><div class="td c5">7.2.2026, 00:46:50</div><div class="td c6"><span class="ab"><svg class="ic " viewBox="0 0 24 24" fill="none" stroke="currentColor" stroke-width="2" stroke-linecap="round" stroke-linejoin="round"><path d="M11 4H4a2 2 0 0 0-2 2v14a2 2 0 0 0 2 2h14a2 2 0 0 0 2-2v-7"/><path d="M18.5 2.5a2.121 2.121 0 0 1 3 3L12 15l-4 1 1-4 9.5-9.5z"/></svg></span><span class="ab grn"><svg class="ic " viewBox="0 0 24 24" fill="none" stroke="currentColor" stroke-width="2" stroke-linecap="round" stroke-linejoin="round"><polygon points="5 3 19 12 5 21 5 3"/></svg></span><span class="ab"><svg class="ic " viewBox="0 0 24 24" fill="none" stroke="currentColor" stroke-width="2" stroke-linecap="round" stroke-linejoin="round"><rect width="14" height="14" x="8" y="8" rx="2" ry="2"/><path d="M4 16c-1.1 0-2-.9-2-2V4c0-1.1.9-2 2-2h10c1.1 0 2 .9 2 2"/></svg></span><span class="ab dim"><svg class="ic " viewBox="0 0 24 24" fill="none" stroke="currentColor" stroke-width="2" stroke-linecap="round" stroke-linejoin="round"><path d="M3 6h18"/><path d="M19 6v14c0 1-1 2-2 2H7c-1 0-2-1-2-2V6"/><path d="M8 6V4c0-1 1-2 2-2h4c1 0 2 1 2 2v2"/><line x1="10" x2="10" y1="11" y2="17"/><line x1="14" x2="14" y1="11" y2="17"/></svg></span></div></div>
<div class="tr" style="height:48px;padding-top:1px"><div class="td c0"><svg class="ic lk" viewBox="0 0 24 24" fill="none" stroke="currentColor" stroke-width="2" stroke-linecap="round" stroke-linejoin="round"><rect width="18" height="11" x="3" y="11" rx="2" ry="2"/><path d="M7 11V7a5 5 0 0 1 10 0v4"/></svg><span class="nm">Executive Summary</span><span class="sys">System</span></div><div class="td c1"><span class="cat cb">Infrastruktur</span></div><div class="td c2"><span class="ds">1-Seite Übersicht für Management (KPIs, A…</span></div><div class="td c3">0</div><div class="td c4">0</div><div class="td c5">7.2.2026, 08:42:27</div><div class="td c6"><span class="ab"><svg class="ic " viewBox="0 0 24 24" fill="none" stroke="currentColor" stroke-width="2" stroke-linecap="round" stroke-linejoin="round"><path d="M11 4H4a2 2 0 0 0-2 2v14a2 2 0 0 0 2 2h14a2 2 0 0 0 2-2v-7"/><path d="M18.5 2.5a2.121 2.121 0 0 1 3 3L12 15l-4 1 1-4 9.5-9.5z"/></svg></span><span class="ab grn"><svg class="ic " viewBox="0 0 24 24" fill="none" stroke="currentColor" stroke-width="2" stroke-linecap="round" stroke-linejoin="round"><polygon points="5 3 19 12 5 21 5 3"/></svg></span><span class="ab"><svg class="ic " viewBox="0 0 24 24" fill="none" stroke="currentColor" stroke-width="2" stroke-linecap="round" stroke-linejoin="round"><rect width="14" height="14" x="8" y="8" rx="2" ry="2"/><path d="M4 16c-1.1 0-2-.9-2-2V4c0-1.1.9-2 2-2h10c1.1 0 2 .9 2 2"/></svg></span><span class="ab dim"><svg class="ic " viewBox="0 0 24 24" fill="none" stroke="currentColor" stroke-width="2" stroke-linecap="round" stroke-linejoin="round"><path d="M3 6h18"/><path d="M19 6v14c0 1-1 2-2 2H7c-1 0-2-1-2-2V6"/><path d="M8 6V4c0-1 1-2 2-2h4c1 0 2 1 2 2v2"/><line x1="10" x2="10" y1="11" y2="17"/><line x1="14" x2="14" y1="11" y2="17"/></svg></span></div></div>
</div></div>
</main>
</body></html>
